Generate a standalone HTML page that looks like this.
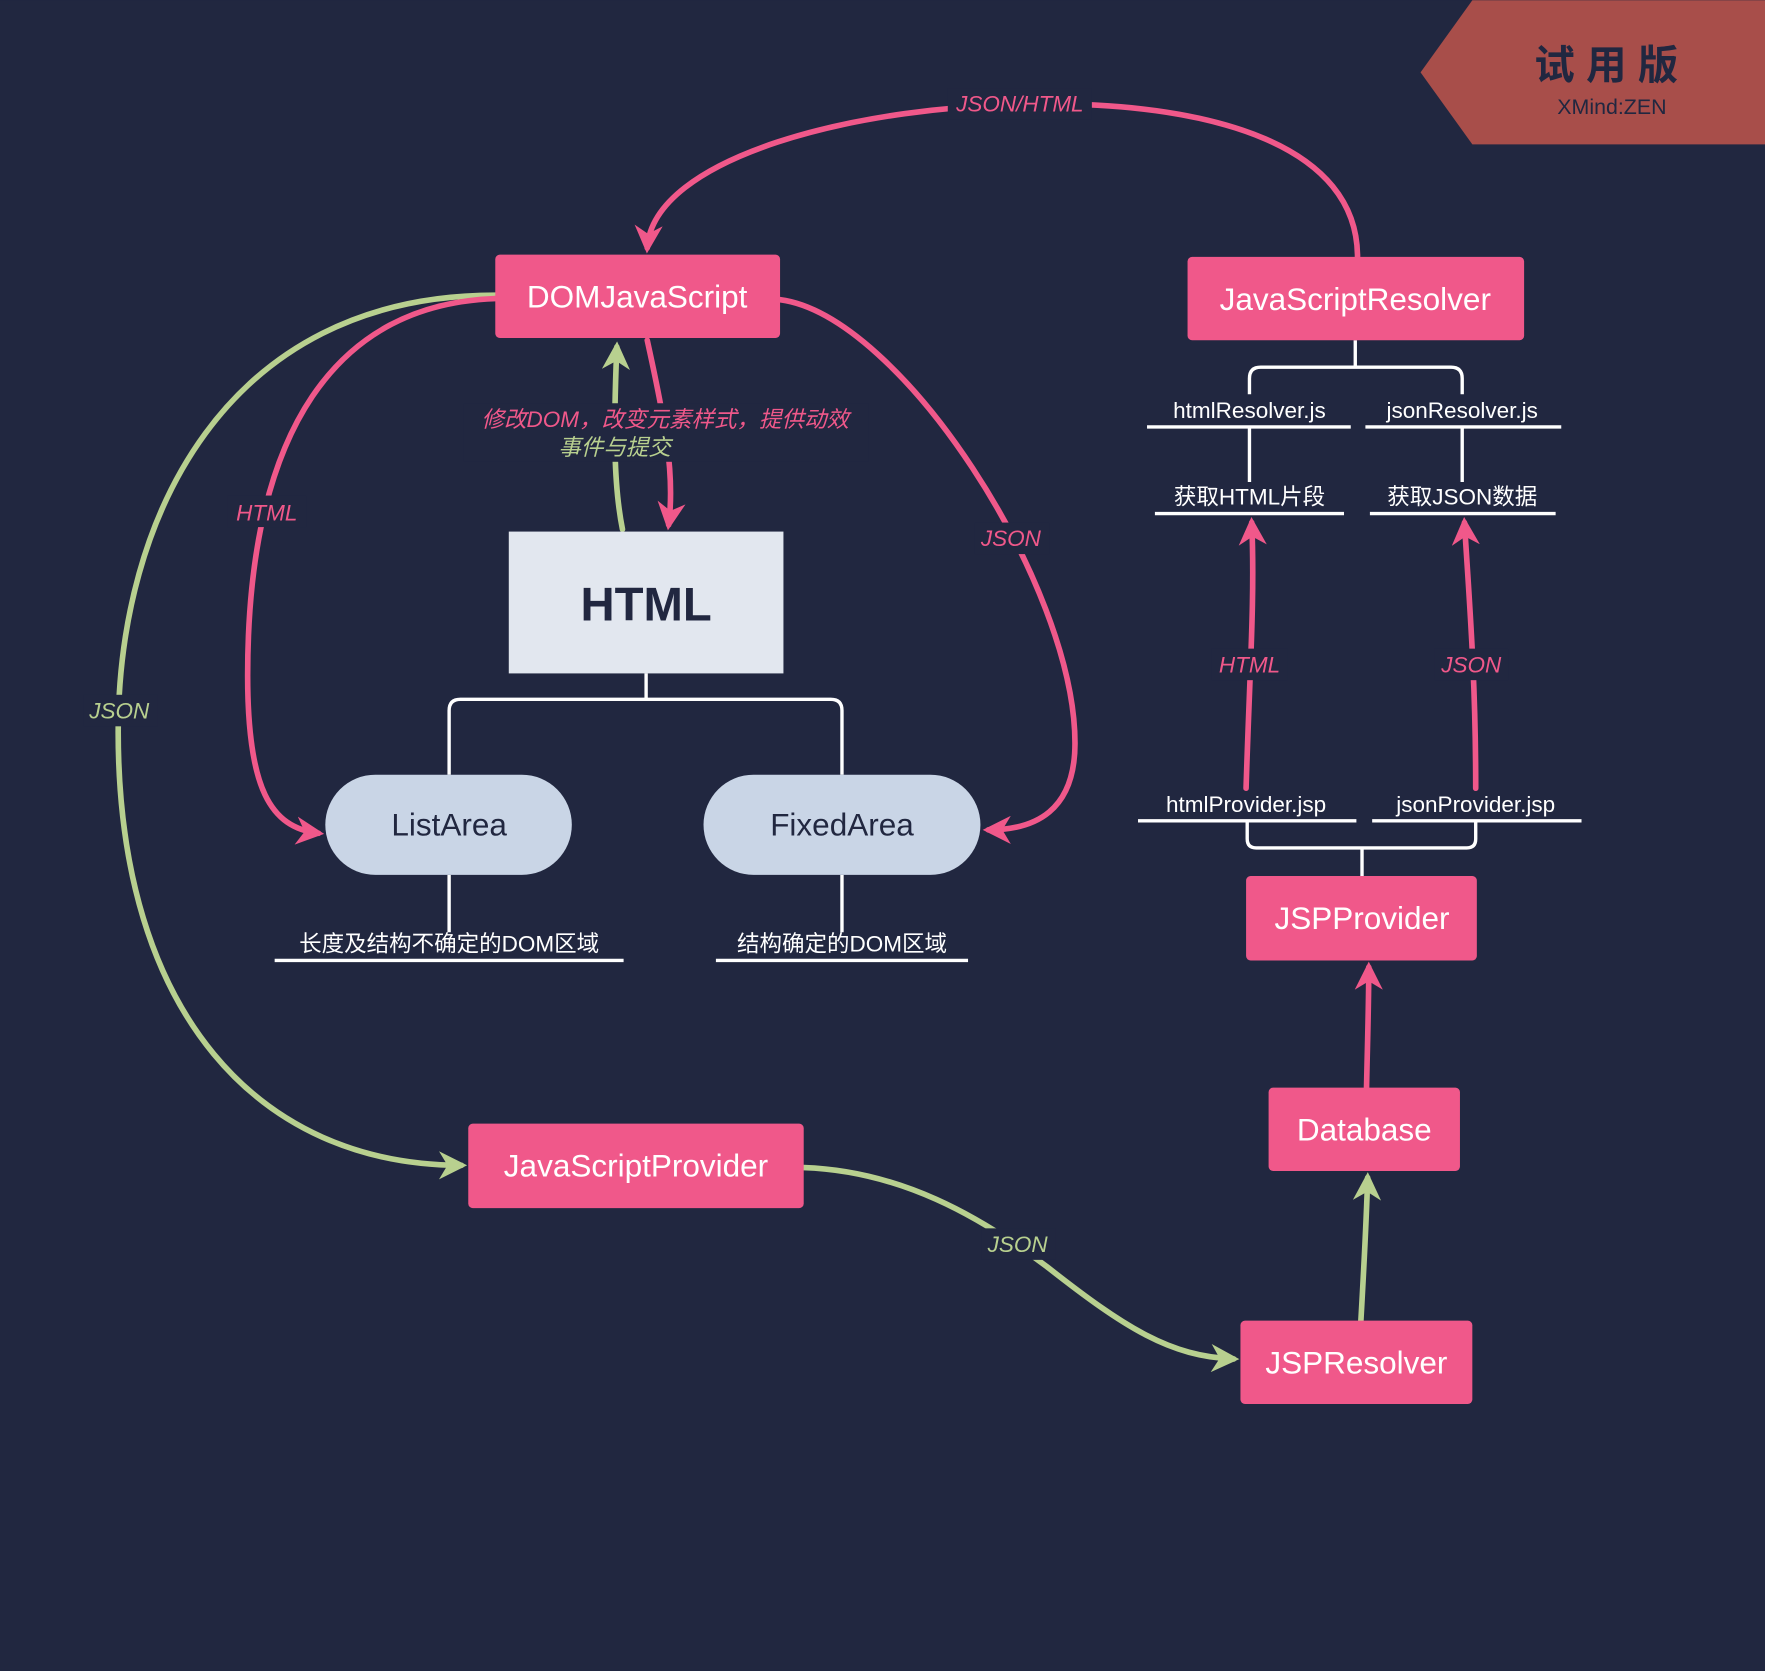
<!DOCTYPE html>
<html><head><meta charset="utf-8"><style>
html,body{margin:0;padding:0;background:#212740;}
svg{display:block}
text{font-family:"Liberation Sans","Noto Sans CJK SC",sans-serif;}
</style></head><body>
<svg width="1765" height="1671" viewBox="0 0 1568 1484" xmlns="http://www.w3.org/2000/svg">
<defs>
<marker id="ap" viewBox="0 0 10 10" refX="8" refY="5" markerWidth="5" markerHeight="5" orient="auto" markerUnits="strokeWidth"><path d="M0,0 L10,5 L0,10 L3,5z" fill="#f0588a"/></marker>
<marker id="ag" viewBox="0 0 10 10" refX="8" refY="5" markerWidth="5" markerHeight="5" orient="auto" markerUnits="strokeWidth"><path d="M0,0 L10,5 L0,10 L3,5z" fill="#b8d08f"/></marker>
</defs>
<rect width="1568" height="1484" fill="#212740"/>
<!-- trial banner -->
<polygon points="1308,0 1568,0 1568,128 1308,128 1262,64" fill="#a84e4a"/>
<text x="1432" y="70" font-size="36" font-weight="bold" fill="#212740" text-anchor="middle" letter-spacing="10">试用版</text>
<text x="1432" y="101" font-size="19" fill="#212740" text-anchor="middle">XMind:ZEN</text>

<g fill="none" stroke-width="5" stroke-linecap="round">
<!-- green curves -->
<path d="M440,262 C200,262 105,460 105,650 C105,900 230,1035 410,1035" stroke="#b8d08f" marker-end="url(#ag)"/>
<path d="M553,470 C545,430 545,380 548,308" stroke="#b8d08f" marker-end="url(#ag)"/>
<path d="M714,1037 C800,1040 870,1080 930,1125 C1000,1180 1040,1205 1096,1207" stroke="#b8d08f" marker-end="url(#ag)"/>
<path d="M1209,1173 C1212,1120 1214,1080 1215,1046" stroke="#b8d08f" marker-end="url(#ag)"/>
<!-- pink curves -->
<path d="M1206,228 C1206,130 1080,92 930,92 C760,92 580,140 575,220" stroke="#f0588a" marker-end="url(#ap)"/>
<path d="M440,265 C300,270 220,380 220,600 C220,700 240,735 283,740" stroke="#f0588a" marker-end="url(#ap)"/>
<path d="M693,266 C800,280 955,520 955,660 C955,720 920,737 878,737" stroke="#f0588a" marker-end="url(#ap)"/>
<path d="M575,302 C590,370 600,420 594,466" stroke="#f0588a" marker-end="url(#ap)"/>
<path d="M1107,700 C1110,600 1115,530 1112,464" stroke="#f0588a" marker-end="url(#ap)"/>
<path d="M1311,700 C1311,600 1305,530 1301,464" stroke="#f0588a" marker-end="url(#ap)"/>
<path d="M1214,966 C1215,920 1216,890 1216,859" stroke="#f0588a" marker-end="url(#ap)"/>
</g>

<!-- white connectors -->
<g fill="none" stroke="#fff" stroke-width="3">
<path d="M574,598 V621 M399,688 V631 Q399,621 409,621 H738 Q748,621 748,631 V688"/>
<path d="M399,777 V828 M748,777 V828"/>
<path d="M244,853 H554 M636,853 H860"/>
<path d="M1204,302 V326 M1110,350 V336 Q1110,326 1120,326 H1289 Q1299,326 1299,336 V350"/>
<path d="M1019,379 H1200 M1213,379 H1387 M1110,379 V428 M1299,379 V428 M1026,456 H1194 M1217,456 H1382"/>
<path d="M1011,729 H1205 M1219,729 H1405 M1108,729 V745 Q1108,753 1116,753 H1303 Q1311,753 1311,745 V729 M1210,753 V778"/>
</g>

<!-- label backgrounds -->
<g fill="#212740">
<rect x="842" y="78" width="128" height="28"/>
<rect x="202" y="440" width="70" height="28"/>
<rect x="74" y="617" width="66" height="28"/>
<rect x="866" y="464" width="66" height="28"/>
<rect x="1076" y="576" width="68" height="28"/>
<rect x="1274" y="576" width="66" height="28"/>
<rect x="872" y="1091" width="66" height="28"/>
<rect x="412" y="358" width="360" height="52"/>
</g>
<g font-size="20" font-style="italic" text-anchor="middle">
<text x="906" y="99" fill="#f0588a">JSON/HTML</text>
<text x="237" y="462" fill="#f0588a">HTML</text>
<text x="106" y="638" fill="#b8d08f">JSON</text>
<text x="898" y="485" fill="#f0588a">JSON</text>
<text x="1110" y="597" fill="#f0588a">HTML</text>
<text x="1307" y="597" fill="#f0588a">JSON</text>
<text x="904" y="1112" fill="#b8d08f">JSON</text>
<text x="591" y="379" fill="#f0588a">修改DOM，改变元素样式，提供动效</text>
<text x="546" y="404" fill="#b8d08f">事件与提交</text>
</g>

<!-- pink boxes -->
<g fill="#f0588a">
<rect x="440" y="226" width="253" height="74" rx="4"/>
<rect x="1055" y="228" width="299" height="74" rx="4"/>
<rect x="416" y="998" width="298" height="75" rx="4"/>
<rect x="1107" y="778" width="205" height="75" rx="4"/>
<rect x="1127" y="966" width="170" height="74" rx="4"/>
<rect x="1102" y="1173" width="206" height="74" rx="4"/>
</g>
<g fill="#fff" font-size="28" text-anchor="middle">
<text x="566" y="273">DOMJavaScript</text>
<text x="1204" y="275">JavaScriptResolver</text>
<text x="565" y="1045">JavaScriptProvider</text>
<text x="1210" y="825">JSPProvider</text>
<text x="1212" y="1013">Database</text>
<text x="1205" y="1220">JSPResolver</text>
</g>

<rect x="452" y="472" width="244" height="126" fill="#e2e7ef"/>
<text x="574" y="551" font-size="42" font-weight="bold" fill="#212740" text-anchor="middle">HTML</text>
<rect x="289" y="688" width="219" height="89" rx="44.5" fill="#c9d5e6"/>
<rect x="625" y="688" width="246" height="89" rx="44.5" fill="#c9d5e6"/>
<text x="399" y="742" font-size="28" fill="#212740" text-anchor="middle">ListArea</text>
<text x="748" y="742" font-size="28" fill="#212740" text-anchor="middle">FixedArea</text>

<g fill="#fff" font-size="20" text-anchor="middle">
<text x="399" y="845">长度及结构不确定的DOM区域</text>
<text x="748" y="845">结构确定的DOM区域</text>
<text x="1110" y="371">htmlResolver.js</text>
<text x="1299" y="371">jsonResolver.js</text>
<text x="1110" y="448">获取HTML片段</text>
<text x="1299" y="448">获取JSON数据</text>
<text x="1107" y="721">htmlProvider.jsp</text>
<text x="1311" y="721">jsonProvider.jsp</text>
</g>
</svg>
</body></html>
